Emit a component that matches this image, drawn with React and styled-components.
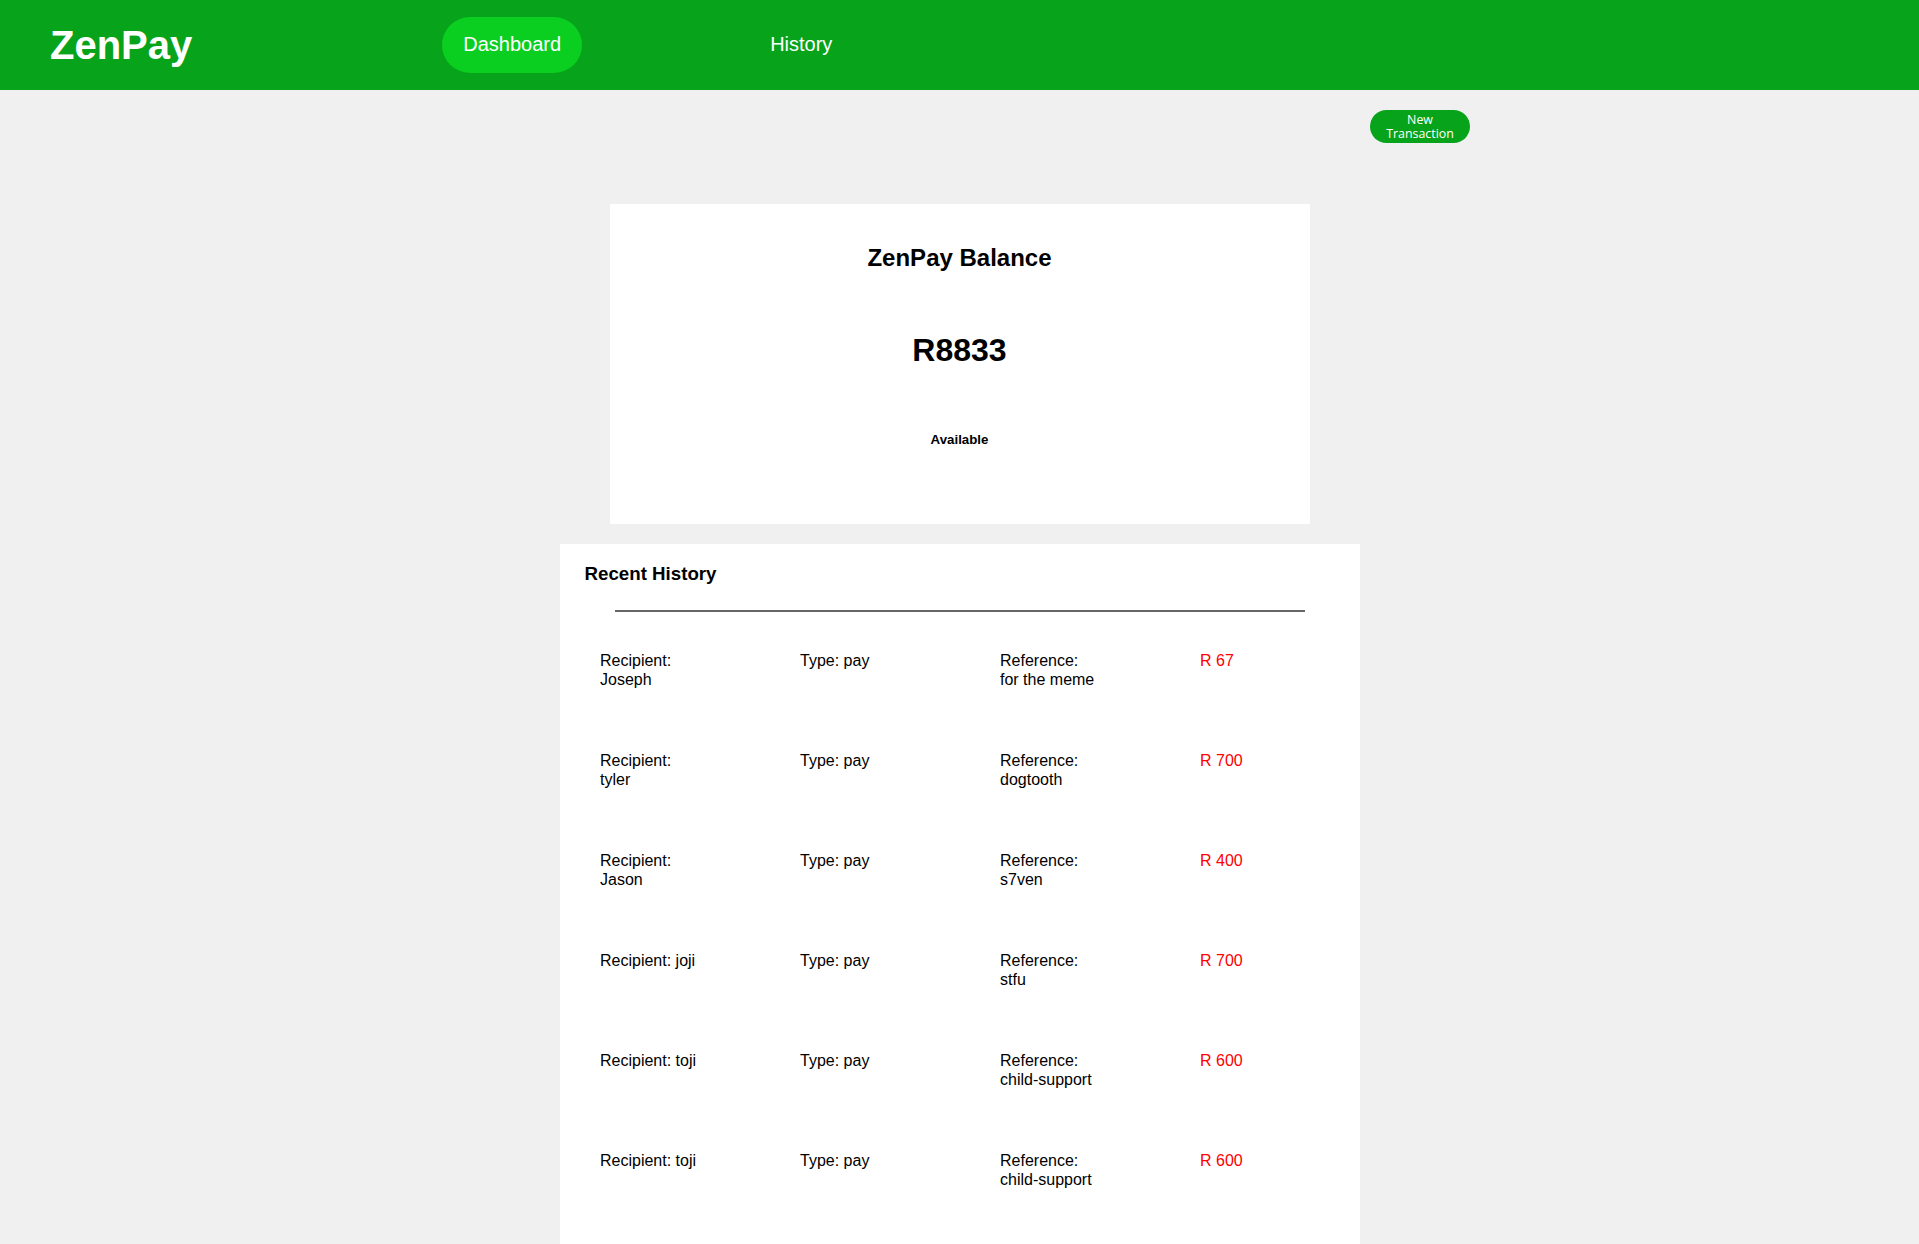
import React from 'react';
import styled, { createGlobalStyle } from 'styled-components';

const transactions = [
    { recipient: 'Joseph', type: 'pay', reference: 'for the meme', amount: 67 },
    { recipient: 'tyler', type: 'pay', reference: 'dogtooth', amount: 700 },
    { recipient: 'Jason', type: 'pay', reference: 's7ven', amount: 400 },
    { recipient: 'joji', type: 'pay', reference: 'stfu', amount: 700 },
    { recipient: 'toji', type: 'pay', reference: 'child-support', amount: 600 },
    { recipient: 'toji', type: 'pay', reference: 'child-support', amount: 600 }
];

const App = () => (
    <>
        <GlobalStyle />
        <Header>
            <Logo>ZenPay</Logo>
            <Nav>
                <NavItem active>Dashboard</NavItem>
                <NavItem>History</NavItem>
            </Nav>
        </Header>
        <Toolbar>
            <NewButton>New Transaction</NewButton>
        </Toolbar>
        <Main>
            <BalanceCard>
                <BalanceTitle>ZenPay Balance</BalanceTitle>
                <Amount>R8833</Amount>
                <Available>Available</Available>
            </BalanceCard>
            <HistoryCard>
                <HistoryTitle>Recent History</HistoryTitle>
                <Divider />
                {
                    transactions.map((t, i) => (
                        <Row key={i}>
                            <Cell>Recipient: {t.recipient}</Cell>
                            <Cell>Type: {t.type}</Cell>
                            <Cell>Reference: {t.reference}</Cell>
                            <Cell negative>R {t.amount}</Cell>
                        </Row>
                    ))
                }
            </HistoryCard>
        </Main>
    </>
);

export default App;

const GlobalStyle = createGlobalStyle`
    html, body {
        margin: 0;
        padding: 0;
        background: #f0f0f0;
        font-family: "Liberation Sans", Arial, sans-serif;
        color: #000;
    }
`;

const Header = styled.header`
    display: flex;
    align-items: center;
    height: 90px;
    padding: 0 50px;
    background: #07a31a;
    color: #fff;
`;

const Logo = styled.h1`
    margin: 0;
    font-size: 40px;
    font-weight: bold;
`;

const Nav = styled.nav`
    display: flex;
    align-items: center;
    gap: 167px;
    margin-left: 250px;
`;

const NavItem = styled.a`
    display: block;
    padding: 16px 21px 17px;
    border-radius: 28px;
    font-size: 20px;
    line-height: 23px;
    color: #fff;
    background: ${props => props.active ? '#0bcf20' : 'transparent'};
    cursor: pointer;
`;

const Toolbar = styled.div`
    display: flex;
    justify-content: flex-end;
    padding: 20px 449px 0 0;
`;

const NewButton = styled.button`
    width: 100px;
    height: 33px;
    padding: 2px 5px;
    border: none;
    border-radius: 17px;
    background: #07a31a;
    color: #fff;
    font-family: "Open Sans", sans-serif;
    font-size: 12.4px;
    line-height: 14px;
`;

const Main = styled.main`
    display: flex;
    flex-direction: column;
    align-items: center;
    gap: 20px;
    margin-top: 61px;
`;

const BalanceCard = styled.section`
    box-sizing: border-box;
    display: flex;
    flex-direction: column;
    align-items: center;
    width: 700px;
    height: 320px;
    padding-top: 40px;
    background: #fff;
`;

const BalanceTitle = styled.h2`
    margin: 0;
    font-size: 24px;
    line-height: 28px;
`;

const Amount = styled.h1`
    margin: 60px 0 0;
    font-size: 32px;
    line-height: 37px;
`;

const Available = styled.h5`
    margin: 63px 0 0;
    font-size: 13.28px;
    line-height: 15px;
`;

const HistoryCard = styled.section`
    box-sizing: border-box;
    width: 800px;
    min-height: 760px;
    padding: 19px 25px 20px;
    background: #fff;
`;

const HistoryTitle = styled.h3`
    margin: 0;
    font-size: 18.72px;
    line-height: 22px;
`;

const Divider = styled.hr`
    margin: 25px 30px 39px;
    border: none;
    border-top: 2px solid #666;
`;

const Row = styled.div`
    display: grid;
    grid-template-columns: repeat(4, 100px);
    column-gap: 100px;
    align-items: start;
    height: 100px;
    padding-left: 15.5px;
`;

const Cell = styled.div`
    font-size: 16px;
    line-height: 19px;
    color: ${props => props.negative ? '#ff0000' : '#000'};
    white-space: ${props => props.negative ? 'nowrap' : 'normal'};
`;
